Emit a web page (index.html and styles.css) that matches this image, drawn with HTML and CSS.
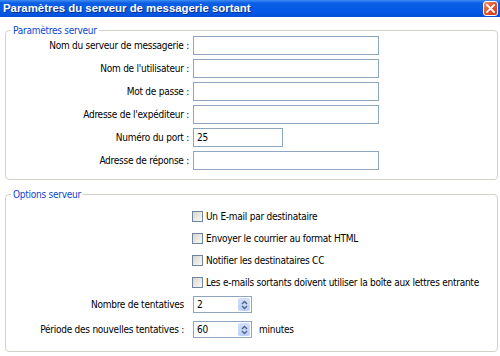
FILE: index.html
```html
<!DOCTYPE html>
<html lang="fr">
<head>
<meta charset="utf-8">
<title>Paramètres du serveur de messagerie sortant</title>
<link rel="stylesheet" href="styles.css">
</head>
<body>
<div class="window">
  <div class="titlebar">
    <span class="title">Paramètres du serveur de messagerie sortant</span>
    <span class="close">
      <svg width="9" height="9" viewBox="0 0 9 9"><path d="M1 1 L8 8 M8 1 L1 8" stroke="#fff" stroke-width="1.8" stroke-linecap="square"/></svg>
    </span>
  </div>
  <div class="content">
    <div class="group group-server">
      <span class="group-title">Paramètres serveur</span>
      <div class="form-grid">
        <span class="label">Nom du serveur de messagerie :</span><span class="input wide"></span>
        <span class="label">Nom de l'utilisateur :</span><span class="input wide"></span>
        <span class="label">Mot de passe :</span><span class="input wide"></span>
        <span class="label">Adresse de l'expéditeur :</span><span class="input wide"></span>
        <span class="label">Numéro du port :</span><span class="input port">25</span>
        <span class="label">Adresse de réponse :</span><span class="input wide"></span>
      </div>
    </div>
    <div class="group group-options">
      <span class="group-title">Options serveur</span>
      <div class="checks">
        <div class="check-row"><span class="checkbox"></span><span>Un E-mail par destinataire</span></div>
        <div class="check-row"><span class="checkbox"></span><span>Envoyer le courrier au format HTML</span></div>
        <div class="check-row"><span class="checkbox"></span><span>Notifier les destinataires CC</span></div>
        <div class="check-row"><span class="checkbox"></span><span>Les e-mails sortants doivent utiliser la boîte aux lettres entrante</span></div>
      </div>
      <div class="spin-grid">
        <span class="label">Nombre de tentatives</span>
        <span class="spin"><span class="spin-value">2</span><span class="spin-btn"><svg width="7" height="10" viewBox="0 0 7 10"><path d="M1 4 L3.5 1.5 L6 4 M1 6 L3.5 8.5 L6 6" fill="none" stroke="#4d6185" stroke-width="1.3"/></svg></span></span>
        <span></span>
        <span class="label">Période des nouvelles tentatives :</span>
        <span class="spin"><span class="spin-value">60</span><span class="spin-btn"><svg width="7" height="10" viewBox="0 0 7 10"><path d="M1 4 L3.5 1.5 L6 4 M1 6 L3.5 8.5 L6 6" fill="none" stroke="#4d6185" stroke-width="1.3"/></svg></span></span>
        <span class="unit">minutes</span>
      </div>
    </div>
  </div>
</div>
</body>
</html>
```
FILE: styles.css
```css
html, body {
  margin: 0;
  padding: 0;
  background: #ffffff;
}
body {
  font-family: "DejaVu Sans Condensed", "DejaVu Sans", sans-serif;
  font-stretch: condensed;
  font-size: 10px;
  letter-spacing: -0.25px;
  color: #000;
}
.window {
  width: 500px;
  height: 356px;
  overflow: hidden;
}
.titlebar {
  height: 17px;
  display: flex;
  align-items: center;
  justify-content: space-between;
  padding: 0 2px 0 3px;
  background: linear-gradient(to bottom, #3f8cf3 0px, #0a5fe4 3px, #0558e6 12px, #0350d8 17px);
}
.title {
  font-family: "Liberation Sans", Arial, sans-serif;
  font-stretch: normal;
  letter-spacing: 0;
  color: #fff;
  font-weight: bold;
  font-size: 11.4px;
  line-height: 17px;
  text-shadow: 1px 1px 0 #0a2f8a;
}
.close {
  width: 13px;
  height: 13px;
  border: 1px solid #fff;
  border-radius: 3px;
  background: linear-gradient(135deg, #f19a7c 0%, #e2582f 45%, #c9401c 100%);
  display: flex;
  align-items: center;
  justify-content: center;
}
.content {
  padding: 13px 2px 0 5px;
  display: flex;
  flex-direction: column;
  gap: 14px;
}
.group {
  position: relative;
  border: 1px solid #d3d2c6;
  border-radius: 4px;
}
.group-title {
  position: absolute;
  top: -7px;
  left: 5px;
  padding: 0 2px;
  background: #fff;
  color: #0b46d6;
  line-height: 13px;
}
.group-server {
  padding: 5px 0 9px 0;
}
.form-grid {
  display: grid;
  grid-template-columns: 183px auto;
  justify-content: start;
  column-gap: 4px;
  row-gap: 4px;
  align-items: center;
  justify-items: start;
}
.label {
  justify-self: end;
  white-space: nowrap;
}
.input {
  box-sizing: border-box;
  height: 19px;
  border: 1px solid #8ea5c1;
  background: #fff;
  line-height: 17px;
  padding-left: 3px;
}
.input.wide {
  width: 186px;
}
.input.port {
  width: 90px;
}
.group-options {
  padding: 10px 0 14px 0;
  height: 158px;
  box-sizing: border-box;
}
.checks {
  display: flex;
  flex-direction: column;
  padding-left: 186px;
}
.check-row {
  height: 22px;
  display: flex;
  align-items: center;
  gap: 3px;
  white-space: nowrap;
}
.checkbox {
  flex-shrink: 0;
  box-sizing: border-box;
  width: 11px;
  height: 11px;
  border: 1px solid #6f83a3;
  background: linear-gradient(135deg, #d6d6ce 0%, #ececE6 60%, #f7f7f4 100%);
}
.spin-grid {
  margin-top: 3px;
  display: grid;
  grid-template-columns: 178px auto auto;
  justify-content: start;
  column-gap: 9px;
  row-gap: 8px;
  align-items: center;
  justify-items: start;
}
.spin {
  box-sizing: border-box;
  width: 59px;
  height: 17px;
  border: 1px solid #8ea5c1;
  display: flex;
  align-items: stretch;
  justify-content: space-between;
}
.spin-value {
  padding-left: 3px;
  line-height: 15px;
}
.spin-btn {
  width: 12px;
  margin: 1px;
  background: linear-gradient(to bottom, #d3e0fc, #bccefa);
  border-radius: 2px;
  display: flex;
  align-items: center;
  justify-content: center;
}
.unit {
  margin-left: -2px;
}
```
